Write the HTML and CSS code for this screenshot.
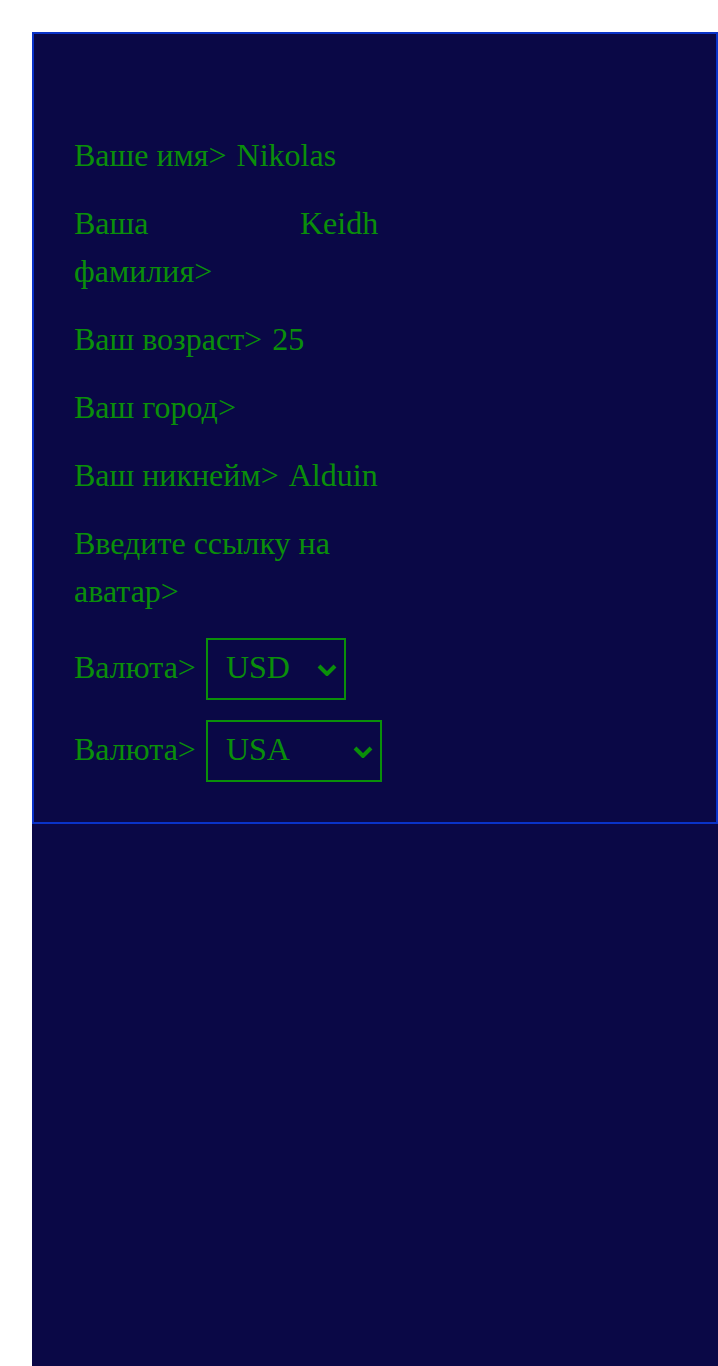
FILE: index.html
```html
<!DOCTYPE html>
<html lang="ru">
<head>
<meta charset="utf-8">
<title>Профиль</title>
<link rel="stylesheet" href="styles.css">
</head>
<body>
<div class="page">
  <div class="card">
    <div class="form">
      <div class="row"><span class="label">Ваше имя&gt;</span><span class="value">Nikolas</span></div>
      <div class="row"><span class="label label-wrap">Ваша фамилия&gt;</span><span class="value">Keidh</span></div>
      <div class="row"><span class="label">Ваш возраст&gt;</span><span class="value">25</span></div>
      <div class="row"><span class="label">Ваш город&gt;</span><span class="value"></span></div>
      <div class="row"><span class="label">Ваш никнейм&gt;</span><span class="value">Alduin</span></div>
      <div class="row"><span class="label label-avatar">Введите ссылку на аватар&gt;</span></div>
      <div class="row row-select row-first-select">
        <span class="label label-select">Валюта&gt;</span>
        <span class="select select-usd">
          <span class="select-text">USD</span>
          <svg class="chev" width="20" height="12" viewBox="0 0 20 12"><path d="M2 2 L10 10 L18 2" fill="none" stroke="currentColor" stroke-width="4"/></svg>
        </span>
      </div>
      <div class="row row-select">
        <span class="label label-select">Валюта&gt;</span>
        <span class="select select-usa">
          <span class="select-text">USA</span>
          <svg class="chev" width="20" height="12" viewBox="0 0 20 12"><path d="M2 2 L10 10 L18 2" fill="none" stroke="currentColor" stroke-width="4"/></svg>
        </span>
      </div>
    </div>
  </div>
</div>
</body>
</html>
```
FILE: styles.css
```css
html, body {
  margin: 0;
  padding: 0;
  background: #ffffff;
}
.page {
  margin: 32px 0 0 32px;
  min-height: 1334px;
  background: #0a0846;
  font-family: "Liberation Serif", "Times New Roman", serif;
  font-size: 32px;
  line-height: 48px;
  color: #0a8f0a;
}
.card {
  border: 2px solid #0a33c8;
  padding: 97px 40px 40px 40px;
}
.form {
  display: flex;
  flex-direction: column;
  gap: 20px;
  width: 320px;
}
.row {
  display: flex;
  align-items: flex-start;
}
.label {
  white-space: nowrap;
}
.value {
  margin-left: 10px;
}
.label-wrap {
  white-space: normal;
  width: 216px;
}
.label-avatar {
  white-space: normal;
  width: 270px;
}
.row-select {
  align-items: center;
}
.row-first-select {
  margin-top: 3px;
}
.label-select {
  position: relative;
  top: -2px;
}
.select {
  position: relative;
  margin-left: 10px;
  height: 58px;
  border: 2px solid #0a8f0a;
  display: flex;
  align-items: center;
  padding-left: 18px;
  box-sizing: content-box;
}
.select-usd {
  width: 118px;
}
.select-usa {
  width: 154px;
}
.select-text {
  line-height: 54px;
  padding-bottom: 4px;
}
.chev {
  position: absolute;
  right: 7px;
  top: 24px;
  color: #0a8f0a;
}
```
